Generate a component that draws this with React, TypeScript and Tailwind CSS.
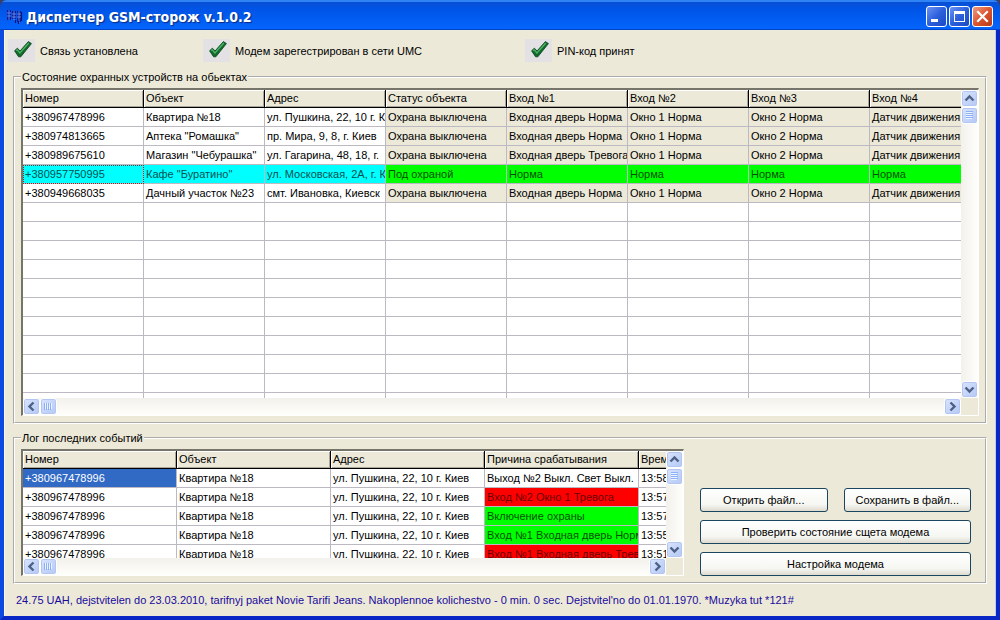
import React from "react";

const FONT = "font-['Liberation_Sans',Arial,sans-serif]";

const deviceColumns = ["Номер", "Объект", "Адрес", "Статус объекта", "Вход №1", "Вход №2", "Вход №3", "Вход №4"];

type Device = { cells: string[]; armed?: boolean };

const devices: Device[] = [
  { cells: ["+380967478996", "Квартира №18", "ул. Пушкина, 22, 10 г. Киев", "Охрана выключена", "Входная дверь Норма", "Окно 1 Норма", "Окно 2 Норма", "Датчик движения"] },
  { cells: ["+380974813665", "Аптека \"Ромашка\"", "пр. Мира, 9, 8, г. Киев", "Охрана выключена", "Входная дверь Норма", "Окно 1 Норма", "Окно 2 Норма", "Датчик движения"] },
  { cells: ["+380989675610", "Магазин \"Чебурашка\"", "ул. Гагарина, 48, 18, г.", "Охрана выключена", "Входная дверь Тревога", "Окно 1 Норма", "Окно 2 Норма", "Датчик движения"] },
  { cells: ["+380957750995", "Кафе \"Буратино\"", "ул. Московская, 2А, г. Киев", "Под охраной", "Норма", "Норма", "Норма", "Норма"], armed: true },
  { cells: ["+380949668035", "Дачный участок №23", "смт. Ивановка, Киевск", "Охрана выключена", "Входная дверь Норма", "Окно 1 Норма", "Окно 2 Норма", "Датчик движения"] },
];

const emptyRows = Array.from({ length: 11 }, (_, i) => i);

const logColumns = ["Номер", "Объект", "Адрес", "Причина срабатывания", "Время"];

type LogEntry = { reason: string; time: string; tone: string };

const log: LogEntry[] = [
  { reason: "Выход №2 Выкл. Свет Выкл.", time: "13:58", tone: "text-black" },
  { reason: "Вход №2 Окно 1 Тревога", time: "13:57", tone: "bg-[#ff0000] text-[#6b0000]" },
  { reason: "Включение охраны", time: "13:57", tone: "bg-[#00ff00] text-[#005000]" },
  { reason: "Вход №1 Входная дверь Норма", time: "13:55", tone: "bg-[#00ff00] text-[#005000]" },
  { reason: "Вход №1 Входная дверь Тревога", time: "13:51", tone: "bg-[#ff0000] text-[#6b0000]" },
];

const cellBase = "h-[19px] overflow-hidden whitespace-nowrap border-r border-b border-[#bdb9c2] p-0 pl-[2px] font-normal";
const headBase =
  "h-[18px] overflow-hidden whitespace-nowrap border-r border-b border-black bg-[#ece9d8] p-0 pt-px pl-[2px] text-left align-top font-normal shadow-[inset_1px_1px_0_#fff,inset_-1px_-1px_0_#aca899]";

function CheckMark() {
  return (
    <svg width="27" height="23" viewBox="0 0 27 23" className="shrink-0 bg-[#e4e1e5]" aria-hidden="true">
      <path d="M6.6 11.8 L9.4 9.2 L12 12 L20.4 2.6 L23.4 4.6 L12.8 17.8 L10.6 17.8 Z" fill="#12692c" stroke="#0b4a1e" strokeWidth="0.9" strokeLinejoin="round" />
      <path d="M8.2 11.6 L9.3 10.8 L11.9 14 L20.8 4" fill="none" stroke="#4cb566" strokeWidth="1.3" />
    </svg>
  );
}

type Dir = "up" | "down" | "left" | "right";

const arrowPaths: Record<Dir, string> = {
  up: "M3.5 9.5 L7.5 5.5 L11.5 9.5",
  down: "M3.5 5.5 L7.5 9.5 L11.5 5.5",
  left: "M9.5 3.5 L5.5 7.5 L9.5 11.5",
  right: "M5.5 3.5 L9.5 7.5 L5.5 11.5",
};

const scrollFace = "h-[17px] w-[17px] shrink-0 rounded-[3px] border border-white bg-linear-to-br from-[#d9e4fd] to-[#b4c8f6] shadow-[inset_0_0_0_1px_#b3c6f0]";

function ScrollButton({ dir, label }: { dir: Dir; label: string }) {
  return (
    <button type="button" aria-label={label} className={scrollFace}>
      <svg width="15" height="15" viewBox="0 0 15 15" className="block">
        <path d={arrowPaths[dir]} fill="none" stroke="#4d6185" strokeWidth="2.4" />
      </svg>
    </button>
  );
}

function ScrollThumb({ vertical }: { vertical?: boolean }) {
  return (
    <div className={scrollFace}>
      <svg width="15" height="15" viewBox="0 0 15 15" className="block">
        <path
          d={vertical ? "M4 4.5h6M4 6.5h6M4 8.5h6M4 10.5h6" : "M4.5 4v6M6.5 4v6M8.5 4v6M10.5 4v6"}
          stroke="#eef4fe"
          strokeWidth="1"
        />
        <path
          d={vertical ? "M4 3.5h7M4 5.5h7M4 7.5h7M4 9.5h7" : "M3.5 4v7M5.5 4v7M7.5 4v7M9.5 4v7"}
          stroke="#8cb0f8"
          strokeWidth="1"
        />
      </svg>
    </div>
  );
}

function ScrollGrid({ children, className }: { children: React.ReactNode; className: string }) {
  return (
    <div className={`grid min-w-0 grid-cols-[minmax(0,1fr)_17px] grid-rows-[minmax(0,1fr)_17px] border-t-2 border-r border-b border-l-2 border-t-[#77756a] border-r-white border-b-white border-l-[#77756a] bg-[#ece9d8] ${className}`}>
      <div className="min-h-0 overflow-hidden bg-white">{children}</div>
      <div className="flex min-h-0 flex-col bg-linear-to-r from-[#f3f1ec] to-[#fefefb]">
        <ScrollButton dir="up" label="Прокрутить вверх" />
        <ScrollThumb vertical />
        <div className="flex-1" />
        <ScrollButton dir="down" label="Прокрутить вниз" />
      </div>
      <div className="flex min-w-0 bg-linear-to-b from-[#f3f1ec] to-[#fefefb]">
        <ScrollButton dir="left" label="Прокрутить влево" />
        <ScrollThumb />
        <div className="flex-1" />
        <ScrollButton dir="right" label="Прокрутить вправо" />
      </div>
      <div />
    </div>
  );
}

function DeviceTable() {
  return (
    <table className="w-[968px] min-w-full table-fixed border-separate border-spacing-0">
      <thead>
        <tr>
          {deviceColumns.map((c) => (
            <th key={c} scope="col" className={headBase}>{c}</th>
          ))}
        </tr>
      </thead>
      <tbody>
        {devices.map((d) => (
          <tr key={d.cells[0]}>
            {d.cells.map((text, i) => {
              const tone = d.armed
                ? i < 3 ? "bg-[#00ffff] text-[#005050]" : "bg-[#00ff00] text-[#005000]"
                : i < 3 ? "bg-white" : "bg-[#ece9d8]";
              const focus = d.armed && i === 0 ? "outline outline-dotted -outline-offset-1 outline-[#803030]" : "";
              return <td key={i} className={`${cellBase} ${tone} ${focus}`}>{text}</td>;
            })}
          </tr>
        ))}
        {emptyRows.map((r) => (
          <tr key={r}>
            {deviceColumns.map((c) => <td key={c} className={cellBase} />)}
          </tr>
        ))}
      </tbody>
    </table>
  );
}

function LogTable() {
  return (
    <table className="w-[770px] min-w-full table-fixed border-separate border-spacing-0">
      <thead>
        <tr>
          {logColumns.map((c) => (
            <th key={c} scope="col" className={headBase}>{c}</th>
          ))}
        </tr>
      </thead>
      <tbody>
        {log.map((e, i) => (
          <tr key={i}>
            <td className={`${cellBase} ${i === 0 ? "bg-[#316ac5] text-white" : ""}`}>+380967478996</td>
            <td className={cellBase}>Квартира №18</td>
            <td className={cellBase}>ул. Пушкина, 22, 10 г. Киев</td>
            <td className={`${cellBase} ${e.tone}`}>{e.reason}</td>
            <td className={cellBase}>{e.time}</td>
          </tr>
        ))}
      </tbody>
    </table>
  );
}

function PushButton({ children, className = "" }: { children: React.ReactNode; className?: string }) {
  return (
    <button type="button" className={`h-6 rounded-[3px] border border-[#1c4560] bg-linear-to-b from-white via-[#f6f6f2] via-70% to-[#dedbd0] text-center ${className}`}>
      {children}
    </button>
  );
}

const captionButton = "flex h-[21px] w-[21px] items-center justify-center rounded-[3px] border border-white";

function TitleBar() {
  return (
    <header className="flex h-[30px] shrink-0 items-center bg-linear-to-b from-[#0a4fd0] from-0% via-[#0054e6] via-30% to-[#0463fb] to-90% pt-[3px] pr-[7px] pl-[6px] shadow-[inset_0_2px_0_#2f83f5,inset_0_-1px_0_#0046c8]">
      <svg width="17" height="16" viewBox="0 0 17 16" className="shrink-0" aria-hidden="true">
        <path d="M1 1h4v10H1zM6 2h4v8H6zM11 2h4v11h-4z" fill="#0a1c9c" />
        <path d="M1 4h4M1 7h4M6 5h4M6 8h4M11 5h4M11 8h4M3 1v10M8 2v9M13 2v12" stroke="#6f9df2" strokeWidth="0.8" />
        <path d="M9.5 11v3M12.5 12v3M15.5 3v9" stroke="#06157a" strokeWidth="1.2" />
      </svg>
      <h1 className="ml-[3px] flex-1 truncate font-['DejaVu_Sans_Condensed','DejaVu_Sans',sans-serif] text-[14px] leading-[20px] font-bold text-white [text-shadow:1px_1px_1px_#0a2a80]">
        Диспетчер GSM-сторож v.1.0.2
      </h1>
      <div className="flex gap-[2px]">
        <button type="button" aria-label="Свернуть" className={`${captionButton} bg-linear-to-br from-[#6c93f0] via-[#2c5fdc] to-[#1c49c4]`}>
          <svg width="19" height="19" viewBox="0 0 19 19"><path d="M4 12h7v3H4z" fill="#fff" /></svg>
        </button>
        <button type="button" aria-label="Развернуть" className={`${captionButton} bg-linear-to-br from-[#6c93f0] via-[#2c5fdc] to-[#1c49c4]`}>
          <svg width="19" height="19" viewBox="0 0 19 19"><path d="M4 4h11v11H4zM5 7v7h9V7z" fill="#fff" fillRule="evenodd" /></svg>
        </button>
        <button type="button" aria-label="Закрыть" className={`${captionButton} bg-linear-to-br from-[#eb9b80] via-[#dd5430] to-[#b83a14]`}>
          <svg width="19" height="19" viewBox="0 0 19 19"><path d="M5 5l9 9M14 5l-9 9" stroke="#fff" strokeWidth="2.2" strokeLinecap="square" /></svg>
        </button>
      </div>
    </header>
  );
}

const group = "min-w-0 border-2 border-white [border-style:groove] pt-[4px] pr-[6px] pb-[6px] pl-[6px]";
const legend = "ml-0 h-[14px] px-px leading-[14px]";

export default function App() {
  return (
    <div className={`flex h-screen flex-col bg-[#3a3f66] text-[11px] leading-[14px] text-black ${FONT}`}>
      <div className="flex min-h-0 flex-1 flex-col overflow-hidden rounded-t-[7px]">
        <TitleBar />
        <div className="flex min-h-0 flex-1 flex-col border-r-4 border-b-4 border-l-4 border-r-[#0827c4] border-b-[#0827c4] border-l-[#0b49e0] bg-[#ece9d8] shadow-[inset_1px_0_0_#f8f6ee,inset_-1px_0_0_#b9cdf0]">
          <div className="grid shrink-0 grid-cols-[195px_322px_1fr] pt-[9px] pb-[8px] pl-[4px]">
            <div className="flex items-center gap-[5px]"><CheckMark />Связь установлена</div>
            <div className="flex items-center gap-[5px]"><CheckMark />Модем зарегестрирован в сети UMC</div>
            <div className="flex items-center gap-[5px]"><CheckMark />PIN-код принят</div>
          </div>
          <main className="flex min-h-0 flex-1 flex-col gap-[7px] px-[9px]">
            <fieldset className={`flex min-h-0 flex-1 flex-col ${group}`}>
              <legend className={legend}>Состояние охранных устройств на обьектах</legend>
              <ScrollGrid className="min-h-0 flex-1">
                <DeviceTable />
              </ScrollGrid>
            </fieldset>
            <fieldset className={`flex shrink-0 items-end gap-4 ${group}`}>
              <legend className={legend}>Лог последних событий</legend>
              <ScrollGrid className="h-[127px] flex-1">
                <LogTable />
              </ScrollGrid>
              <div className="mr-2 grid w-[271px] shrink-0 grid-cols-2 gap-x-4 gap-y-2">
                <PushButton>Открить файл...</PushButton>
                <PushButton>Сохранить в файл...</PushButton>
                <PushButton className="col-span-2">Проверить состояние сщета модема</PushButton>
                <PushButton className="col-span-2">Настройка модема</PushButton>
              </div>
            </fieldset>
          </main>
          <footer className="flex h-8 shrink-0 items-center px-3 text-[#1a0a9c]">
            24.75 UAH, dejstvitelen do 23.03.2010, tarifnyj paket Novie Tarifi Jeans. Nakoplennoe kolichestvo - 0 min. 0 sec. Dejstvitel'no do 01.01.1970. *Muzyka tut *121#
          </footer>
        </div>
      </div>
    </div>
  );
}
